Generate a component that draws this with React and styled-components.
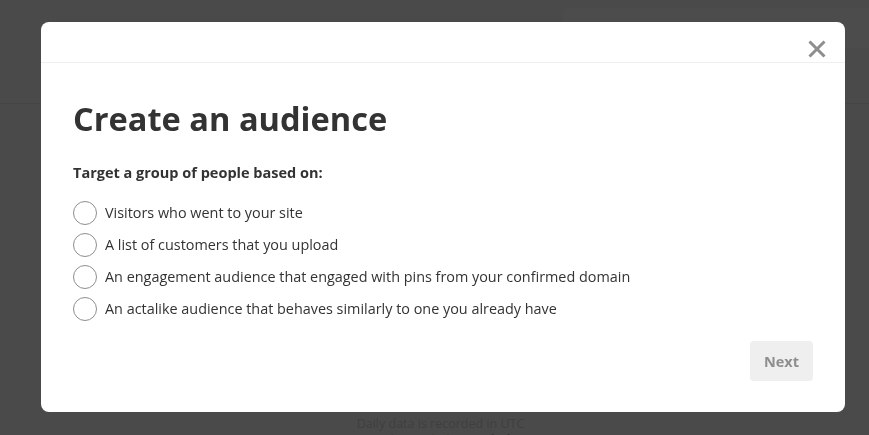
import React, { useState } from 'react';
import styled, { createGlobalStyle } from 'styled-components';

const GlobalStyle = createGlobalStyle`
  html, body {
    margin: 0;
    padding: 0;
    background: #4a4a4a;
    font-family: "Segoe UI", "Open Sans", "Noto Sans", sans-serif;
    color: #333;
  }
  * { box-sizing: border-box; }
`;

// the dimmed page behind the modal
const Page = styled.div`
  width: 869px;
  height: 435px;
  overflow: hidden;
  display: flex;
  flex-direction: column;
`;

const PageHeader = styled.div`
  height: 104px;
  border-bottom: 1px solid #454545;
  display: flex;
  justify-content: flex-end;
  padding-top: 8px;
`;

const SearchBox = styled.div`
  width: 306px;
  height: 40px;
  background: #4c4c4c;
  border-radius: 4px 0 0 4px;
`;

const PageBody = styled.div`
  flex: 1;
`;

const PageFooter = styled.div`
  display: flex;
  flex-direction: column;
  align-items: center;
  font-size: 12.5px;
  line-height: 16px;
  color: #3f3f3f;
  margin-bottom: -13px;
  padding-left: 12px;
  b { color: #363636; }
`;

const Overlay = styled.div`
  position: fixed;
  inset: 0;
  padding: 22px 24px 0 41px;
`;

const Modal = styled.div`
  width: 804px;
  height: 390px;
  background: #fff;
  border-radius: 8px;
  display: flex;
  flex-direction: column;
`;

const ModalHeader = styled.div`
  height: 41px;
  border-bottom: 1px solid #efefef;
  display: flex;
  justify-content: flex-end;
  align-items: flex-end;
  padding: 0 18px 2px 0;
`;

const CloseButton = styled.button`
  border: none;
  background: none;
  padding: 0;
  width: 20px;
  height: 20px;
  display: flex;
  align-items: center;
  justify-content: center;
  cursor: pointer;
  margin-bottom: 1px;
`;

const ModalBody = styled.div`
  flex: 1;
  padding: 32px 32px 0 32px;
  display: flex;
  flex-direction: column;
`;

const Title = styled.h1`
  margin: 0;
  font-size: 32.6px;
  line-height: 48px;
  font-weight: 700;
  color: #333;
`;

const Subtitle = styled.div`
  margin-top: 20px;
  font-size: 14.5px;
  font-weight: 700;
  line-height: 20px;
  color: #333;
`;

const Options = styled.div`
  margin-top: 18px;
  display: flex;
  flex-direction: column;
  gap: 8px;
`;

const Option = styled.label`
  display: flex;
  align-items: center;
  gap: 8px;
  font-size: 14.4px;
  line-height: 24px;
  color: #333;
  cursor: pointer;
`;

const Radio = styled.span`
  width: 24px;
  height: 24px;
  border-radius: 50%;
  border: 1px solid ${(p) => (p.$checked ? '#555' : '#8e8e8e')};
  background: #fff;
  flex-shrink: 0;
  display: flex;
  align-items: center;
  justify-content: center;
  &::after {
    content: '';
    width: 10px;
    height: 10px;
    border-radius: 50%;
    background: ${(p) => (p.$checked ? '#333' : 'transparent')};
  }
`;

const Footer = styled.div`
  display: flex;
  justify-content: flex-end;
  padding: 0 32px 31px 0;
`;

const NextButton = styled.button`
  width: 63px;
  height: 40px;
  border: none;
  border-radius: 4px;
  background: #efefef;
  color: #8e8e8e;
  font-family: inherit;
  font-size: 14.5px;
  font-weight: 700;
`;

const OPTIONS = [
  'Visitors who went to your site',
  'A list of customers that you upload',
  'An engagement audience that engaged with pins from your confirmed domain',
  'An actalike audience that behaves similarly to one you already have',
];

export default function App() {
  const [picked, setPicked] = useState(null);
  return (
    <>
      <GlobalStyle />
      <Page>
        <PageHeader>
          <SearchBox />
        </PageHeader>
        <PageBody />
        <PageFooter>
          <span>Daily data is recorded in UTC</span>
          <span>Need more help? <b>Get help</b></span>
        </PageFooter>
      </Page>
      <Overlay>
        <Modal>
          <ModalHeader>
            <CloseButton aria-label="Close">
              <svg width="18" height="18" viewBox="0 0 18 18">
                <path d="M1.5 1.5 L16.5 16.5 M16.5 1.5 L1.5 16.5" stroke="#8e8e8e" strokeWidth="3" />
              </svg>
            </CloseButton>
          </ModalHeader>
          <ModalBody>
            <Title>Create an audience</Title>
            <Subtitle>Target a group of people based on:</Subtitle>
            <Options>
              {OPTIONS.map((text, i) => (
                <Option key={i} onClick={() => setPicked(i)}>
                  <Radio $checked={picked === i} />
                  {text}
                </Option>
              ))}
            </Options>
          </ModalBody>
          <Footer>
            <NextButton disabled={picked === null}>Next</NextButton>
          </Footer>
        </Modal>
      </Overlay>
    </>
  );
}
